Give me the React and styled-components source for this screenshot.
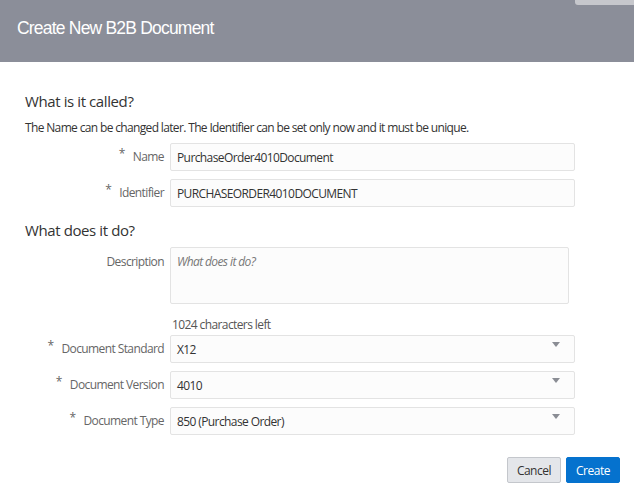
import React from "react";
import styled, { createGlobalStyle } from "styled-components";

const Global = createGlobalStyle`
  html, body {
    margin: 0;
    padding: 0;
    background: #fff;
  }
  body {
    font-family: "Open Sans", "Noto Sans", sans-serif;
  }
`;

function Field({ label, required, children, top }) {
  return (
    <Row>
      <Label top={top}>
        {required && <Star>*</Star>}
        {label}
      </Label>
      {children}
    </Row>
  );
}

function Select({ value }) {
  return (
    <SelectBox>
      <span>{value}</span>
      <Caret />
    </SelectBox>
  );
}

function App() {
  return (
    <Dialog>
      <Global />
      <Header>
        <Title>Create New B2B Document</Title>
        <Tab />
      </Header>
      <Body>
        <Heading>What is it called?</Heading>
        <Hint>
          The Name can be changed later. The Identifier can be set only now and
          it must be unique.
        </Hint>
        <Form>
          <Field label="Name" required>
            <Input>PurchaseOrder4010Document</Input>
          </Field>
          <Field label="Identifier" required>
            <Input>PURCHASEORDER4010DOCUMENT</Input>
          </Field>
        </Form>
        <Heading second>What does it do?</Heading>
        <Form>
          <Field label="Description" top>
            <TextArea>What does it do?</TextArea>
          </Field>
          <Row>
            <span />
            <Counter>1024 characters left</Counter>
          </Row>
          <Field label="Document Standard" required>
            <Select value="X12" />
          </Field>
          <Field label="Document Version" required>
            <Select value="4010" />
          </Field>
          <Field label="Document Type" required>
            <Select value="850 (Purchase Order)" />
          </Field>
        </Form>
        <Footer>
          <Button>Cancel</Button>
          <Button primary>Create</Button>
        </Footer>
      </Body>
    </Dialog>
  );
}

const Dialog = styled.div`
  width: 634px;
  height: 500px;
  background: #fff;
  overflow: hidden;
`;

const Header = styled.div`
  position: relative;
  height: 62px;
  background: #8b8e99;
  padding: 16px 17px 0;
  box-sizing: border-box;
`;

const Title = styled.h1`
  margin: 0;
  font-family: "Liberation Sans", Arial, sans-serif;
  font-weight: normal;
  font-size: 17.5px;
  letter-spacing: -0.8px;
  line-height: 24px;
  color: #fff;
`;

const Tab = styled.div`
  position: absolute;
  top: 0;
  right: 0;
  width: 59px;
  height: 5px;
  background: #c6c7cc;
  border-bottom-left-radius: 3px;
`;

const Body = styled.div`
  padding: 29px 14px 0 25px;
`;

const Heading = styled.h2`
  margin: ${(p) => (p.second ? "13px" : "0")} 0 0;
  font-size: 15px;
  font-weight: normal;
  line-height: 20px;
  color: #333;
  letter-spacing: -0.4px;
`;

const Hint = styled.p`
  margin: 9px 0 3px;
  font-size: 12px;
  line-height: 16px;
  color: #333;
  letter-spacing: -0.65px;
`;

const Form = styled.div`
  display: grid;
  row-gap: 8px;
  margin-top: 7px;
`;

const Row = styled.div`
  display: grid;
  grid-template-columns: 139px 405px;
  column-gap: 6px;
  align-items: center;
`;

const Label = styled.div`
  display: flex;
  justify-content: flex-end;
  align-self: ${(p) => (p.top ? "start" : "center")};
  padding-top: ${(p) => (p.top ? "7px" : "0")};
  font-size: 12px;
  line-height: 16px;
  color: #666;
  letter-spacing: -0.6px;
  white-space: nowrap;
`;

const Star = styled.span`
  margin-right: 8px;
  position: relative;
  top: -3px;
  color: #666;
`;

const Input = styled.div`
  height: 28px;
  box-sizing: border-box;
  border: 1px solid #e3e3e3;
  border-radius: 2px;
  background: #fcfcfc;
  padding: 0 6px;
  display: flex;
  align-items: center;
  font-size: 12px;
  color: #333;
  letter-spacing: -0.6px;
`;

const TextArea = styled.div`
  width: 399px;
  height: 57px;
  box-sizing: border-box;
  border: 1px solid #e3e3e3;
  border-radius: 2px;
  background: #fcfcfc;
  padding: 6px 6px;
  font-size: 12px;
  line-height: 16px;
  font-style: italic;
  color: #777;
  letter-spacing: -0.6px;
`;

const Counter = styled.div`
  margin: 5px 0 -6px;
  padding-left: 2px;
  font-size: 12px;
  line-height: 16px;
  color: #555;
  letter-spacing: -0.6px;
`;

const SelectBox = styled(Input)`
  position: relative;
`;

const Caret = styled.span`
  position: absolute;
  right: 14px;
  top: 6px;
  width: 0;
  height: 0;
  border-left: 4px solid transparent;
  border-right: 4px solid transparent;
  border-top: 5px solid #8a8d94;
`;

const Footer = styled.div`
  display: flex;
  justify-content: flex-end;
  gap: 5px;
  margin-top: 22px;
`;

const Button = styled.button`
  height: 26px;
  padding: 0 9px;
  border-radius: 2px;
  font-family: "Open Sans", sans-serif;
  font-size: 12px;
  letter-spacing: -0.5px;
  cursor: pointer;
  border: 1px solid ${(p) => (p.primary ? "#0572ce" : "#c4c7cc")};
  background: ${(p) => (p.primary ? "#0572ce" : "#e4e6ea")};
  color: ${(p) => (p.primary ? "#fff" : "#333")};
  min-width: 54px;
`;

export default App;
